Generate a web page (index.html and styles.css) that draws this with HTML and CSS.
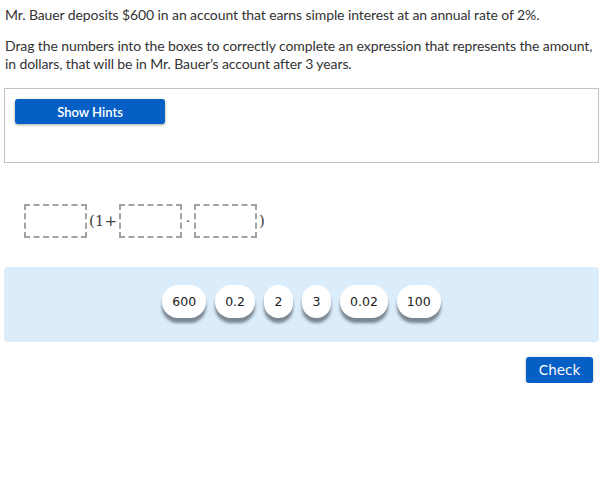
FILE: index.html
```html
<!DOCTYPE html>
<html>
<head>
<meta charset="utf-8">
<link rel="stylesheet" href="styles.css">
</head>
<body>
<div class="page">
  <p class="stem">Mr. Bauer deposits $600 in an account that earns simple interest at an annual rate of 2%.</p>
  <p class="prompt">Drag the numbers into the boxes to correctly complete an expression that represents the amount, in dollars, that will be in Mr. Bauer’s account after 3 years.</p>
  <div class="hints">
    <button class="hint-btn">Show Hints</button>
  </div>
  <div class="expr">
    <span class="slot"></span>
    <span class="math">(1+</span>
    <span class="slot"></span>
    <span class="math dot">·</span>
    <span class="slot"></span>
    <span class="math">)</span>
  </div>
  <div class="bank">
    <span class="chip">600</span>
    <span class="chip">0.2</span>
    <span class="chip">2</span>
    <span class="chip">3</span>
    <span class="chip">0.02</span>
    <span class="chip">100</span>
  </div>
  <div class="actions">
    <button class="check">Check</button>
  </div>
</div>
</body>
</html>
```
FILE: styles.css
```css
html, body { margin: 0; padding: 0; background: #fff; }
.page {
  padding: 0 14px 0 4px;
  font-family: "Lato", "Open Sans", sans-serif;
  color: #333;
  font-size: 14px;
}
.stem, .prompt {
  margin: 0 -4px 0 0;
  padding-left: 1px;
  line-height: 18px;
  letter-spacing: -0.1px;
}
.stem { padding-top: 6px; }
.prompt { margin-top: 13px; }
.hints {
  margin-top: 15px;
  border: 1px solid #bfc3c5;
  padding: 10px;
  box-sizing: border-box;
  height: 75px;
}
.hint-btn {
  display: block;
  width: 150px;
  height: 25px;
  border: none;
  border-radius: 3px;
  background: #055fc5;
  color: #fff;
  font-family: inherit;
  font-size: 13px;
  font-weight: 600;
  box-shadow: 0 1px 3px rgba(0,0,0,.35);
  padding: 0;
}
.expr {
  display: flex;
  align-items: center;
  margin-top: 41px;
  padding-left: 20px;
  height: 34px;
}
.slot {
  width: 63px;
  height: 34px;
  box-sizing: border-box;
  border: 2px dashed #a3a3a3;
  display: inline-block;
}
.math {
  font-family: "DejaVu Serif", "Liberation Serif", serif;
  font-size: 15px;
  color: #444;
  padding: 0 2px;
}
.dot { padding: 0 4px; font-size: 13px; }
.bank {
  margin-top: 29px;
  height: 75px;
  background: #dbecfa;
  border-radius: 4px;
  display: flex;
  justify-content: center;
  align-items: flex-start;
  gap: 9px;
  padding-top: 18px;
  box-sizing: border-box;
}
.chip {
  height: 33px;
  min-width: 29px;
  padding: 0 10px;
  box-sizing: border-box;
  background: #fff;
  border-radius: 16px;
  display: flex;
  align-items: center;
  justify-content: center;
  font-family: "DejaVu Sans", sans-serif;
  font-size: 12.5px;
  color: #222;
  box-shadow: 0 5px 3px rgba(70,80,90,.65);
}
.actions {
  display: flex;
  justify-content: flex-end;
  margin-top: 15px;
  padding-right: 6px;
}
.check {
  width: 67px;
  height: 26px;
  border: none;
  border-radius: 3px;
  background: #055fc5;
  color: #fff;
  font-family: "DejaVu Sans", sans-serif;
  font-size: 13.5px;
  padding: 0;
  box-shadow: 0 1px 3px rgba(0,0,0,.3);
}
```
